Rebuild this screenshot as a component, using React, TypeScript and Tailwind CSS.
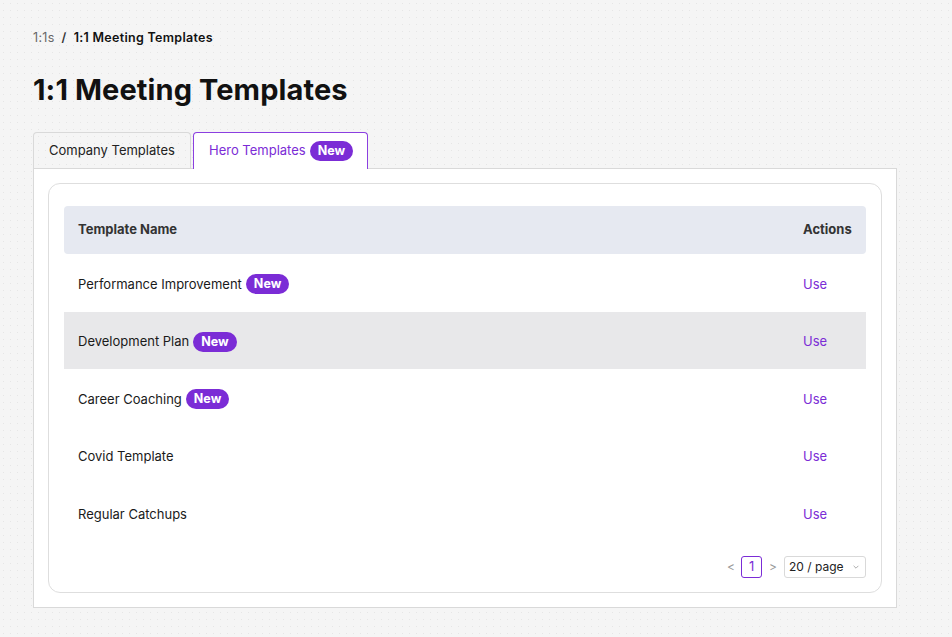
import React from "react";

const rows = [
  { name: "Performance Improvement", isNew: true },
  { name: "Development Plan", isNew: true, hl: true },
  { name: "Career Coaching", isNew: true },
  { name: "Covid Template", isNew: false },
  { name: "Regular Catchups", isNew: false },
];

function Badge() {
  return (
    <span className="inline-flex items-center h-[20px] px-[8px] rounded-full bg-[#7b2cd6] text-white text-[12.5px] font-bold leading-none">
      New
    </span>
  );
}

export default function App() {
  return (
    <div className="min-h-[637px] w-full bg-[#f5f5f5] bg-[radial-gradient(#e6e6e6_0.6px,transparent_0.7px)] bg-[size:7px_7px] font-['Inter',sans-serif] text-[#1a1a1a] pl-[33px] pt-[29px] pb-[29px]">
      <div className="h-[18px] flex items-center text-[12.5px] tracking-[0.3px]">
        <span className="text-[#666]">1:1s</span>
        <span className="mx-[7px] text-[#333] font-semibold">/</span>
        <span className="font-semibold text-[#111]">1:1 Meeting Templates</span>
      </div>
      <h1 className="mt-[25px] text-[29px] leading-[36px] font-bold text-[#111] tracking-[0.1px]">1:1 Meeting Templates</h1>
      <div className="mt-[24px] w-[864px]">
        <div className="flex gap-[2px] h-[37px] relative z-10 -mb-px">
          <div className="h-full w-[158px] flex items-center whitespace-nowrap px-[15px] border border-[#d9d9d9] border-b-0 rounded-t-[4px] text-[13px] text-[#222]">
            Company Templates
          </div>
          <div className="h-full w-[175px] flex items-center whitespace-nowrap gap-[4px] px-[15px] bg-white border border-[#8b3fe0] border-b-0 rounded-t-[4px] text-[13px] text-[#7b2cd6]">
            <span>Hero Templates</span>
            <Badge />
          </div>
        </div>
        <div className="bg-white border border-[#d9d9d9] p-[14px]">
          <div className="border border-[#dedede] rounded-[12px] px-[15px] pt-[22px] pb-[14px]">
            <div className="h-[48px] flex items-center bg-[#e6e9f1] rounded-[4px] text-[13px] font-bold text-[#333]">
              <div className="flex-1 pl-[14px]">Template Name</div>
              <div className="w-[63px]">Actions</div>
            </div>
            {rows.map((r) => (
              <div
                key={r.name}
                className={`h-[57.5px] flex items-center pt-[3px] text-[13px] ${r.hl ? "bg-[#e8e8ea]" : ""}`}
              >
                <div className="flex-1 pl-[14px] flex items-center gap-[4px] text-[#1a1a1a]">
                  <span>{r.name}</span>
                  {r.isNew && <Badge />}
                </div>
                <div className="w-[63px] text-[#7b2cd6]">Use</div>
              </div>
            ))}
            <div className="mt-[14px] h-[22px] flex items-center justify-end">
              <span className="text-[#999] text-[12px] mr-[6px]">&lt;</span>
              <span className="w-[21px] h-[22px] flex items-center justify-center border border-[#7b2cd6] rounded-[3px] text-[#7b2cd6] text-[13px]">1</span>
              <span className="text-[#999] text-[12px] ml-[7px] mr-[7px]">&gt;</span>
              <div className="w-[82px] h-[22px] flex items-center justify-between border border-[#d9d9d9] rounded-[3px] pl-[4px] pr-[5px] text-[12px] text-[#222]">
                <span>20 / page</span>
                <svg width="8" height="8" viewBox="0 0 10 10" fill="none" stroke="#aaa" strokeWidth="1.2">
                  <path d="M2 3.5 L5 6.5 L8 3.5" />
                </svg>
              </div>
            </div>
          </div>
        </div>
      </div>
    </div>
  );
}
